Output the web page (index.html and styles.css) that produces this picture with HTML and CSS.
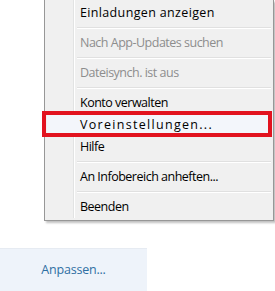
FILE: index.html
```html
<!DOCTYPE html>
<html>
<head>
<meta charset="utf-8">
<link rel="stylesheet" href="styles.css">
</head>
<body>
<div class="page">
  <div class="spacer"></div>
  <div class="panel">
    <a class="link">Anpassen...</a>
  </div>
  <div class="menu">
    <div class="item wide">Einladungen anzeigen</div>
    <div class="sep"></div>
    <div class="item disabled">Nach App-Updates suchen</div>
    <div class="sep"></div>
    <div class="item disabled">Dateisynch. ist aus</div>
    <div class="sep"></div>
    <div class="item">Konto verwalten</div>
    <div class="item hot wider">Voreinstellungen...<span class="mark"></span></div>
    <div class="item">Hilfe</div>
    <div class="sep"></div>
    <div class="item">An Infobereich anheften...</div>
    <div class="sep"></div>
    <div class="item">Beenden</div>
  </div>
</div>
</body>
</html>
```
FILE: styles.css
```css
html, body {
  margin: 0;
  padding: 0;
  background: #ffffff;
}
.page {
  position: relative;
  width: 275px;
  height: 291px;
  overflow: hidden;
  font-family: "Open Sans", "Noto Sans", sans-serif;
}
.spacer {
  height: 248px;
}
.panel {
  width: 147px;
  height: 43px;
  background: #eef3fa;
  border-top: 1px solid #e6ebf2;
  box-sizing: border-box;
  display: flex;
  justify-content: center;
  padding-top: 12px;
}
.link {
  color: #2e6fa3;
  font-size: 12.5px;
  letter-spacing: -0.2px;
}
.menu {
  position: absolute;
  left: 44px;
  top: 0;
  width: 230px;
  box-sizing: border-box;
  background: #f0f0f0;
  border: 1px solid #979797;
  border-top: none;
  padding: 2px;
  box-shadow: 2px 2px 2px rgba(0,0,0,0.25);
}
.menu::before {
  content: "";
  position: absolute;
  left: 28px;
  top: 0;
  bottom: 2px;
  width: 1px;
  background: #e2e3e3;
  border-right: 1px solid #ffffff;
}
.item {
  position: relative;
  height: 22px;
  line-height: 22px;
  padding-left: 33px;
  font-size: 12.5px;
  letter-spacing: -0.5px;
  color: #000000;
  white-space: nowrap;
}
.item.wide {
  letter-spacing: 0.35px;
}
.item.wider {
  letter-spacing: 1.3px;
}
.item.disabled {
  color: #8d8d8d;
}
.sep {
  height: 8px;
  position: relative;
}
.sep::after {
  content: "";
  position: absolute;
  left: 30px;
  right: 0;
  top: 3px;
  height: 1px;
  background: #e0e0e0;
  border-bottom: 1px solid #ffffff;
}
.item.hot {
  background: #f3f6fb;
}
.mark {
  position: absolute;
  left: -5px;
  right: -1px;
  top: -3px;
  bottom: -1px;
  border: 4px solid #e2131f;
}
```
